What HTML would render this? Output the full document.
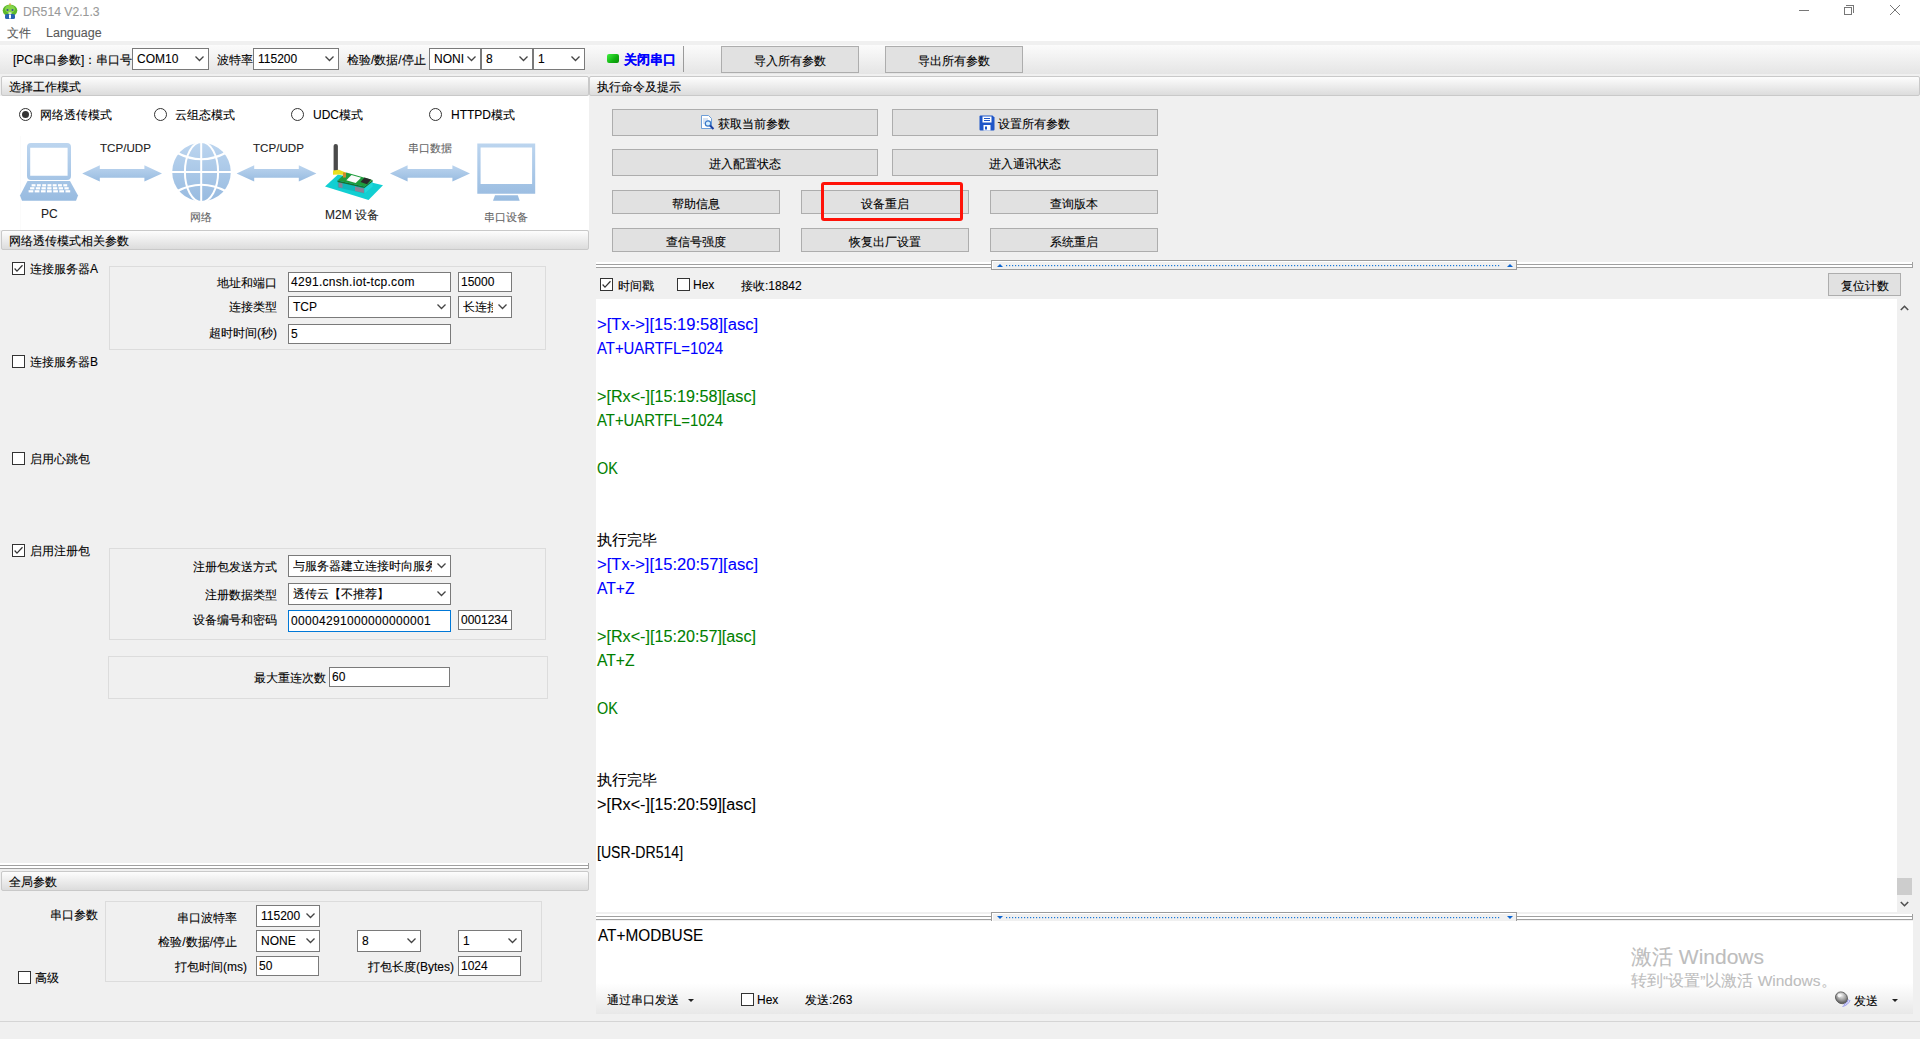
<!DOCTYPE html>
<html><head><meta charset="utf-8"><style>
*{box-sizing:border-box;margin:0;padding:0}
html,body{width:1920px;height:1039px;overflow:hidden;background:#f0f0f0;font-family:"Liberation Sans",sans-serif;font-size:12px;color:#000;position:relative;-webkit-text-stroke:0.1px currentColor}
.a{position:absolute;white-space:nowrap}
.hdr{position:absolute;height:20px;border:1px solid #c9c9c9;border-radius:2px;background:linear-gradient(#fdfdfd,#dcdcdc);}
.hdr span{position:absolute;left:7px;top:3px;font-size:12px;line-height:14px}
.inp{position:absolute;background:#fff;border:1px solid #7a7a7a;height:20px;font-size:12px;line-height:18px;padding-left:2px;overflow:hidden;white-space:nowrap}
.cmb{position:absolute;background:#fff;border:1px solid #7a7a7a;height:21px;font-size:12px;line-height:19px;padding-left:4px;overflow:hidden;white-space:nowrap}
.cmb svg{position:absolute;right:4px}
.btn{position:absolute;background:#e1e1e1;border:1px solid #adadad;font-size:12px;text-align:center;white-space:nowrap}
.cb{position:absolute;width:13px;height:13px;border:1px solid #333;background:#fff}
.rd{position:absolute;width:13px;height:13px;border:1px solid #333;border-radius:50%;background:#fff}
.rd.on::after{content:"";position:absolute;left:2px;top:2px;width:7px;height:7px;border-radius:50%;background:#333}
.grp{position:absolute;border:1px solid #dcdcdc}
.log{position:absolute;left:598px;font-size:16px;line-height:24px;white-space:nowrap}
.log .c{font-size:15px}
.blue{color:#0000ff}.green{color:#008000}
</style></head><body>
<div class="a" style="left:0;top:0;width:1920px;height:41px;background:#fff"></div>
<div class="a" style="left:23px;top:5px;font-size:12.2px;color:#999">DR514 V2.1.3</div>
<svg class="a" style="left:2px;top:3px" width="16" height="16" viewBox="0 0 16 16"><ellipse cx="8" cy="7.5" rx="7.3" ry="6" fill="#5cb82a"/><ellipse cx="8" cy="6" rx="5" ry="4" fill="#86d44a"/><path d="M7 0.5L8 3L9 0.5Z" fill="#f0a030"/><rect x="3" y="11" width="10" height="5" rx="1.5" fill="#2a62b0"/><rect x="7" y="11.5" width="2" height="4" fill="#fff"/><circle cx="5.5" cy="7" r="1" fill="#3a4a9a"/><circle cx="10.5" cy="7" r="1" fill="#3a4a9a"/><rect x="6.5" y="9.5" width="3" height="1.3" fill="#fff"/></svg>
<div class="a" style="left:7px;top:25px;color:#5a5a5a">文件</div>
<div class="a" style="left:46px;top:26px;color:#5a5a5a;font-size:12.5px">Language</div>
<div class="a" style="left:1799px;top:10px;width:10px;height:1px;background:#777"></div>
<div class="a" style="left:1844px;top:7px;width:8px;height:8px;border:1px solid #777"></div>
<div class="a" style="left:1846px;top:5px;width:8px;height:8px;border-top:1px solid #777;border-right:1px solid #777"></div>
<svg class="a" style="left:1889px;top:4px" width="12" height="12"><path d="M1 1L11 11M11 1L1 11" stroke="#777" stroke-width="1"/></svg>
<div class="a" style="left:0;top:45px;width:1920px;height:29px;background:linear-gradient(#fbfbfb,#e5e5e5)"></div>
<div class="a" style="left:13px;top:52px;">[PC串口参数]：串口号</div>
<div class="cmb" style="left:132px;top:48px;width:77px;height:22px;line-height:20px;padding-left:4px;">COM10<svg style="top:7px" width="9" height="6"><path d="M0.5 0.5L4.5 4.5L8.5 0.5" fill="none" stroke="#444" stroke-width="1.3"/></svg></div>
<div class="a" style="left:217px;top:52px;">波特率</div>
<div class="cmb" style="left:253px;top:48px;width:86px;height:22px;line-height:20px;padding-left:4px;">115200<svg style="top:7px" width="9" height="6"><path d="M0.5 0.5L4.5 4.5L8.5 0.5" fill="none" stroke="#444" stroke-width="1.3"/></svg></div>
<div class="a" style="left:347px;top:52px;">检验/数据/停止</div>
<div class="cmb" style="left:429px;top:48px;width:52px;height:22px;line-height:20px;padding-left:4px;">NONI<svg style="top:7px" width="9" height="6"><path d="M0.5 0.5L4.5 4.5L8.5 0.5" fill="none" stroke="#444" stroke-width="1.3"/></svg></div>
<div class="cmb" style="left:481px;top:48px;width:52px;height:22px;line-height:20px;padding-left:4px;">8<svg style="top:7px" width="9" height="6"><path d="M0.5 0.5L4.5 4.5L8.5 0.5" fill="none" stroke="#444" stroke-width="1.3"/></svg></div>
<div class="cmb" style="left:533px;top:48px;width:52px;height:22px;line-height:20px;padding-left:4px;">1<svg style="top:7px" width="9" height="6"><path d="M0.5 0.5L4.5 4.5L8.5 0.5" fill="none" stroke="#444" stroke-width="1.3"/></svg></div>
<div class="a" style="left:607px;top:54px;width:12px;height:9px;border-radius:2px;background:linear-gradient(135deg,#40f040,#10b010 60%,#0a900a)"></div>
<div class="a" style="left:624px;top:52px;font-weight:bold;color:#0000ff;font-size:12.7px">关闭串口</div>
<div class="a" style="left:683px;top:46px;width:1px;height:26px;background:#9a9a9a"></div>
<div class="btn" style="left:721px;top:46px;width:138px;height:27px;line-height:23px;padding-top:3px;">导入所有参数</div>
<div class="btn" style="left:885px;top:46px;width:138px;height:27px;line-height:23px;padding-top:3px;">导出所有参数</div>
<div class="hdr" style="left:1px;top:76px;width:588px;height:20px"><span>选择工作模式</span></div>
<div class="a" style="left:0;top:96px;width:589px;height:134px;background:#fff"></div>
<div class="a" style="left:20px;top:136px;width:1px;height:94px;background:#fbfbfb"></div>
<div class="rd on" style="left:19px;top:108px"></div>
<div class="a" style="left:40px;top:107px;">网络透传模式</div>
<div class="rd" style="left:154px;top:108px"></div>
<div class="a" style="left:175px;top:107px;">云组态模式</div>
<div class="rd" style="left:291px;top:108px"></div>
<div class="a" style="left:313px;top:107px;">UDC模式</div>
<div class="rd" style="left:429px;top:108px"></div>
<div class="a" style="left:451px;top:107px;">HTTPD模式</div>
<svg class="a" style="left:0;top:0" width="589" height="230" viewBox="0 0 589 230"><defs><linearGradient id="lb" x1="0" y1="0" x2="0" y2="1"><stop offset="0" stop-color="#bcd5ef"/><stop offset="1" stop-color="#98bbe0"/></linearGradient><linearGradient id="lb2" gradientUnits="userSpaceOnUse" x1="0" y1="143" x2="0" y2="201"><stop offset="0" stop-color="#bcd5ef"/><stop offset="1" stop-color="#98bbe0"/></linearGradient></defs><path d="M82.2 173.4L99.80000000000001 165.20000000000002V169.1H144.4V165.20000000000002L162 173.4L144.4 181.6V177.70000000000002H99.80000000000001V181.6Z" fill="url(#lb)"/><path d="M236.6 173.4L254.2 165.20000000000002V169.1H298.79999999999995V165.20000000000002L316.4 173.4L298.79999999999995 181.6V177.70000000000002H254.2V181.6Z" fill="url(#lb)"/><path d="M390 173.4L407.6 165.20000000000002V169.1H452.4V165.20000000000002L470 173.4L452.4 181.6V177.70000000000002H407.6V181.6Z" fill="url(#lb)"/><path fill-rule="evenodd" fill="url(#lb2)" d="M31 143H67Q71 143 71 147V176Q71 180 67 180H31Q27 180 27 176V147Q27 143 31 143ZM30.2 147.8V175.7H67.6V147.8Z"/><path fill="url(#lb2)" d="M27.5 181H70L78 195.6L76 200.7H22L20 195.6Z"/><rect x="31.6" y="184.2" width="3.9" height="2.2" fill="#fff"/><rect x="36.9" y="184.2" width="3.9" height="2.2" fill="#fff"/><rect x="42.2" y="184.2" width="3.9" height="2.2" fill="#fff"/><rect x="47.5" y="184.2" width="3.9" height="2.2" fill="#fff"/><rect x="52.7" y="184.2" width="3.9" height="2.2" fill="#fff"/><rect x="58.0" y="184.2" width="3.9" height="2.2" fill="#fff"/><rect x="63.3" y="184.2" width="3.9" height="2.2" fill="#fff"/><rect x="30.1" y="187.2" width="4.3" height="2.2" fill="#fff"/><rect x="35.8" y="187.2" width="4.3" height="2.2" fill="#fff"/><rect x="41.5" y="187.2" width="4.3" height="2.2" fill="#fff"/><rect x="47.2" y="187.2" width="4.3" height="2.2" fill="#fff"/><rect x="53.0" y="187.2" width="4.3" height="2.2" fill="#fff"/><rect x="58.7" y="187.2" width="4.3" height="2.2" fill="#fff"/><rect x="64.4" y="187.2" width="4.3" height="2.2" fill="#fff"/><rect x="28.6" y="190.2" width="4.7" height="2.2" fill="#fff"/><rect x="34.7" y="190.2" width="4.7" height="2.2" fill="#fff"/><rect x="40.9" y="190.2" width="4.7" height="2.2" fill="#fff"/><rect x="47.0" y="190.2" width="4.7" height="2.2" fill="#fff"/><rect x="53.2" y="190.2" width="4.7" height="2.2" fill="#fff"/><rect x="59.3" y="190.2" width="4.7" height="2.2" fill="#fff"/><rect x="65.5" y="190.2" width="4.7" height="2.2" fill="#fff"/><g><circle cx="201.5" cy="172" r="29.3" fill="url(#lb2)"/><g fill="none" stroke="#fff" stroke-width="2"><line x1="201.2" y1="142" x2="201.2" y2="202"/><line x1="172" y1="172" x2="231" y2="172"/><ellipse cx="201.5" cy="172" rx="16.6" ry="30"/><path d="M176.5 152.5Q201.5 166 226.5 152.5"/><path d="M176.5 191.5Q201.5 178 226.5 191.5"/></g></g><path fill-rule="evenodd" fill="url(#lb2)" d="M477.3 143.4H535.2V193.8H477.3ZM480.6 147.4V184H532.1V147.4Z"/><path fill="url(#lb2)" d="M495 195.3H517.8L519.7 200.7H493Z"/><path fill="#12cfd2" d="M325 186.5L338 174.4L383 185.2L368.5 200Z"/><path fill="#0fb8bb" d="M337.8 181.5L364.5 187.5V193.5L337.8 187.5Z"/><path fill="#22d8da" d="M364.5 187.5L372.6 181V186.5L364.5 193.5Z"/><path fill="#8a8296" d="M338.5 182.5L342.5 183.4V188L338.5 187.2ZM355 186.5L364 188.5V193L355 191Z"/><path fill="#1a6e2e" d="M337.5 180.5L364.5 186.5L372.6 180V181.5L364.5 188L337.5 182Z"/><path fill="#1e9c3c" d="M337.5 180.5L346.3 172.4L372.6 180L364.5 186.5Z"/><path fill="#fbfbfb" d="M346.3 180.2L351.5 175L361 177.8L355.7 183Z"/><path fill="#2a2a2a" d="M360.5 182L364.5 177.4L371 179.5L367 184.3Z"/><rect x="333.6" y="144" width="4.3" height="28" rx="2.1" fill="#4a4a4a"/><path fill="#e8e020" d="M333 170.5L339 169.7L345.5 172.5V175L339 174.5L333 174.8Z"/><rect x="343" y="172.5" width="3" height="5" fill="#d08a30"/></svg>
<div class="a" style="left:100px;top:141px;font-size:11.6px;color:#222">TCP/UDP</div>
<div class="a" style="left:253px;top:141px;font-size:11.6px;color:#222">TCP/UDP</div>
<div class="a" style="left:408px;top:141px;font-size:11px;color:#666">串口数据</div>
<div class="a" style="left:41px;top:207px;font-size:12px;color:#222">PC</div>
<div class="a" style="left:190px;top:210px;font-size:11px;color:#666">网络</div>
<div class="a" style="left:325px;top:207px;font-size:12px;color:#222">M2M 设备</div>
<div class="a" style="left:484px;top:210px;font-size:11px;color:#666">串口设备</div>
<div class="hdr" style="left:1px;top:230px;width:588px;height:20px"><span>网络透传模式相关参数</span></div>
<div class="cb" style="left:12px;top:262px"><svg class="a" style="left:-1px;top:-1px" width="13" height="13"><path d="M2.6 6.5L5 9.1L10.5 3.3" fill="none" stroke="#333" stroke-width="1.25"/></svg></div>
<div class="a" style="left:30px;top:261px;">连接服务器A</div>
<div class="grp" style="left:109px;top:266px;width:437px;height:84px"></div>
<div class="a" style="left:-23px;width:300px;text-align:right;top:275px;">地址和端口</div>
<div class="inp" style="left:288px;top:272px;width:163px;height:20px;line-height:18px;"><span style="letter-spacing:0.3px">4291.cnsh.iot-tcp.com</span></div>
<div class="inp" style="left:458px;top:272px;width:54px;height:20px;line-height:18px;">15000</div>
<div class="a" style="left:-23px;width:300px;text-align:right;top:299px;">连接类型</div>
<div class="cmb" style="left:288px;top:296px;width:163px;height:22px;line-height:20px;padding-left:4px;">TCP<svg style="top:7px" width="9" height="6"><path d="M0.5 0.5L4.5 4.5L8.5 0.5" fill="none" stroke="#444" stroke-width="1.3"/></svg></div>
<div class="cmb" style="left:458px;top:296px;width:54px;height:22px;line-height:20px;padding-left:4px;"><span style="display:inline-block;width:30px;overflow:hidden;vertical-align:top">长连接</span><svg style="top:7px" width="9" height="6"><path d="M0.5 0.5L4.5 4.5L8.5 0.5" fill="none" stroke="#444" stroke-width="1.3"/></svg></div>
<div class="a" style="left:-23px;width:300px;text-align:right;top:325px;">超时时间(秒)</div>
<div class="inp" style="left:288px;top:324px;width:163px;height:20px;line-height:18px;">5</div>
<div class="cb" style="left:12px;top:355px"></div>
<div class="a" style="left:30px;top:354px;">连接服务器B</div>
<div class="cb" style="left:12px;top:452px"></div>
<div class="a" style="left:30px;top:451px;">启用心跳包</div>
<div class="cb" style="left:12px;top:544px"><svg class="a" style="left:-1px;top:-1px" width="13" height="13"><path d="M2.6 6.5L5 9.1L10.5 3.3" fill="none" stroke="#333" stroke-width="1.25"/></svg></div>
<div class="a" style="left:30px;top:543px;">启用注册包</div>
<div class="grp" style="left:109px;top:548px;width:437px;height:92px"></div>
<div class="a" style="left:-23px;width:300px;text-align:right;top:559px;">注册包发送方式</div>
<div class="cmb" style="left:288px;top:555px;width:163px;height:22px;line-height:20px;padding-left:4px;"><span style="display:inline-block;width:139px;overflow:hidden;vertical-align:top">与服务器建立连接时向服务器发送</span><svg style="top:7px" width="9" height="6"><path d="M0.5 0.5L4.5 4.5L8.5 0.5" fill="none" stroke="#444" stroke-width="1.3"/></svg></div>
<div class="a" style="left:-23px;width:300px;text-align:right;top:587px;">注册数据类型</div>
<div class="cmb" style="left:288px;top:583px;width:163px;height:22px;line-height:20px;padding-left:4px;">透传云【不推荐】<svg style="top:7px" width="9" height="6"><path d="M0.5 0.5L4.5 4.5L8.5 0.5" fill="none" stroke="#444" stroke-width="1.3"/></svg></div>
<div class="a" style="left:-23px;width:300px;text-align:right;top:612px;">设备编号和密码</div>
<div class="inp" style="left:288px;top:610px;width:163px;height:22px;line-height:20px;border-color:#0078d7"><span style="letter-spacing:0.32px">00004291000000000001</span></div>
<div class="inp" style="left:458px;top:610px;width:54px;height:20px;line-height:18px;">0001234</div>
<div class="grp" style="left:108px;top:656px;width:440px;height:43px"></div>
<div class="a" style="left:26px;width:300px;text-align:right;top:670px;">最大重连次数</div>
<div class="inp" style="left:329px;top:667px;width:121px;height:20px;line-height:18px;">60</div>
<div class="a" style="left:0;top:863px;width:589px;height:6px;background:linear-gradient(#fff 0,#fff 2px,#a0a0a0 2px,#a0a0a0 3px,#fff 3px,#fff 5px,#a0a0a0 5px)"></div>
<div class="a" style="left:588px;top:863px;width:1px;height:6px;background:#a0a0a0"></div>
<div class="hdr" style="left:1px;top:871px;width:588px;height:20px"><span>全局参数</span></div>
<div class="a" style="left:50px;top:907px;">串口参数</div>
<div class="grp" style="left:105px;top:901px;width:437px;height:81px"></div>
<div class="a" style="left:-63px;width:300px;text-align:right;top:910px;">串口波特率</div>
<div class="cmb" style="left:256px;top:905px;width:64px;height:22px;line-height:20px;padding-left:4px;"><span style="display:inline-block;width:40px;overflow:hidden;vertical-align:top">115200</span><svg style="top:7px" width="9" height="6"><path d="M0.5 0.5L4.5 4.5L8.5 0.5" fill="none" stroke="#444" stroke-width="1.3"/></svg></div>
<div class="a" style="left:-63px;width:300px;text-align:right;top:934px;">检验/数据/停止</div>
<div class="cmb" style="left:256px;top:930px;width:64px;height:22px;line-height:20px;padding-left:4px;">NONE<svg style="top:7px" width="9" height="6"><path d="M0.5 0.5L4.5 4.5L8.5 0.5" fill="none" stroke="#444" stroke-width="1.3"/></svg></div>
<div class="cmb" style="left:357px;top:930px;width:64px;height:22px;line-height:20px;padding-left:4px;">8<svg style="top:7px" width="9" height="6"><path d="M0.5 0.5L4.5 4.5L8.5 0.5" fill="none" stroke="#444" stroke-width="1.3"/></svg></div>
<div class="cmb" style="left:458px;top:930px;width:64px;height:22px;line-height:20px;padding-left:4px;">1<svg style="top:7px" width="9" height="6"><path d="M0.5 0.5L4.5 4.5L8.5 0.5" fill="none" stroke="#444" stroke-width="1.3"/></svg></div>
<div class="a" style="left:-53px;width:300px;text-align:right;top:959px;">打包时间(ms)</div>
<div class="inp" style="left:256px;top:956px;width:63px;height:20px;line-height:18px;">50</div>
<div class="a" style="left:154px;width:300px;text-align:right;top:959px;">打包长度(Bytes)</div>
<div class="inp" style="left:458px;top:956px;width:63px;height:20px;line-height:18px;">1024</div>
<div class="cb" style="left:18px;top:971px"></div>
<div class="a" style="left:35px;top:970px;">高级</div>
<div class="hdr" style="left:589px;top:76px;width:1331px;height:20px"><span>执行命令及提示</span></div>
<div class="btn" style="left:612px;top:109px;width:266px;height:27px;line-height:23px;padding-top:3px;"><span style="padding-left:18px">获取当前参数</span></div>
<svg class="a" style="left:700px;top:115px" width="16" height="15" viewBox="0 0 16 15"><path d="M1.5 0.5H8.5L11.5 3.5V13.5H1.5Z" fill="#fff" stroke="#6f9fd8" stroke-width="1"/><path d="M3 4h5M3 6h6M3 8h3" stroke="#b0c8e8" stroke-width="1"/><circle cx="8" cy="8.5" r="2.7" fill="#d8f0ff" stroke="#3a78c8" stroke-width="1.2"/><path d="M10 10.5L13.5 14" stroke="#1a3fa0" stroke-width="2"/></svg>
<div class="btn" style="left:892px;top:109px;width:266px;height:27px;line-height:23px;padding-top:3px;"><span style="padding-left:18px">设置所有参数</span></div>
<svg class="a" style="left:979px;top:115px" width="16" height="16" viewBox="0 0 16 16"><path d="M0.5 1.5Q0.5 0.5 1.5 0.5H13.5L15.5 2.5V14.5Q15.5 15.5 14.5 15.5H1.5Q0.5 15.5 0.5 14.5Z" fill="#1f56c8"/><rect x="3.5" y="1.5" width="9" height="6" fill="#fff"/><path d="M5 3.5h6M5 5.5h6" stroke="#1f56c8" stroke-width="1"/><rect x="4.5" y="10" width="7" height="5.5" fill="#fff"/><rect x="6" y="11.5" width="2" height="3" fill="#1f56c8"/></svg>
<div class="btn" style="left:612px;top:149px;width:266px;height:27px;line-height:23px;padding-top:3px;">进入配置状态</div>
<div class="btn" style="left:892px;top:149px;width:266px;height:27px;line-height:23px;padding-top:3px;">进入通讯状态</div>
<div class="btn" style="left:612px;top:190px;width:168px;height:24px;line-height:20px;padding-top:3px;">帮助信息</div>
<div class="btn" style="left:801px;top:190px;width:168px;height:24px;line-height:20px;padding-top:3px;">设备重启</div>
<div class="btn" style="left:990px;top:190px;width:168px;height:24px;line-height:20px;padding-top:3px;">查询版本</div>
<div class="btn" style="left:612px;top:228px;width:168px;height:24px;line-height:20px;padding-top:3px;">查信号强度</div>
<div class="btn" style="left:801px;top:228px;width:168px;height:24px;line-height:20px;padding-top:3px;">恢复出厂设置</div>
<div class="btn" style="left:990px;top:228px;width:168px;height:24px;line-height:20px;padding-top:3px;">系统重启</div>
<div class="a" style="left:821px;top:182px;width:142px;height:39px;border:3px solid #ff1208;border-radius:3px"></div>
<div class="a" style="left:596px;top:262px;width:1317px;height:6px;background:linear-gradient(#fff 0,#fff 2px,#a0a0a0 2px,#a0a0a0 3px,#fff 3px,#fff 5px,#a0a0a0 5px)"></div>
<div class="a" style="left:1912px;top:262px;width:1px;height:6px;background:#a0a0a0"></div>
<div class="a" style="left:991px;top:260px;width:526px;height:10px;background:#f0f0f0;border:1px solid #9b9b9b;box-shadow:inset 1px 1px 0 #fff"></div>
<svg class="a" style="left:997px;top:264px" width="6" height="3"><path d="M0 3L3 0L6 3Z" fill="#0c64d0"/></svg>
<svg class="a" style="left:1507px;top:264px" width="6" height="3"><path d="M0 3L3 0L6 3Z" fill="#0c64d0"/></svg>
<svg class="a" style="left:1006px;top:265px" width="496" height="2"><rect x="0" y="0" width="1.2" height="1.2" fill="#1a78d8"/><rect x="3" y="0" width="1.2" height="1.2" fill="#1a78d8"/><rect x="6" y="0" width="1.2" height="1.2" fill="#1a78d8"/><rect x="9" y="0" width="1.2" height="1.2" fill="#1a78d8"/><rect x="12" y="0" width="1.2" height="1.2" fill="#1a78d8"/><rect x="15" y="0" width="1.2" height="1.2" fill="#1a78d8"/><rect x="18" y="0" width="1.2" height="1.2" fill="#1a78d8"/><rect x="21" y="0" width="1.2" height="1.2" fill="#1a78d8"/><rect x="24" y="0" width="1.2" height="1.2" fill="#1a78d8"/><rect x="27" y="0" width="1.2" height="1.2" fill="#1a78d8"/><rect x="30" y="0" width="1.2" height="1.2" fill="#1a78d8"/><rect x="33" y="0" width="1.2" height="1.2" fill="#1a78d8"/><rect x="36" y="0" width="1.2" height="1.2" fill="#1a78d8"/><rect x="39" y="0" width="1.2" height="1.2" fill="#1a78d8"/><rect x="42" y="0" width="1.2" height="1.2" fill="#1a78d8"/><rect x="45" y="0" width="1.2" height="1.2" fill="#1a78d8"/><rect x="48" y="0" width="1.2" height="1.2" fill="#1a78d8"/><rect x="51" y="0" width="1.2" height="1.2" fill="#1a78d8"/><rect x="54" y="0" width="1.2" height="1.2" fill="#1a78d8"/><rect x="57" y="0" width="1.2" height="1.2" fill="#1a78d8"/><rect x="60" y="0" width="1.2" height="1.2" fill="#1a78d8"/><rect x="63" y="0" width="1.2" height="1.2" fill="#1a78d8"/><rect x="66" y="0" width="1.2" height="1.2" fill="#1a78d8"/><rect x="69" y="0" width="1.2" height="1.2" fill="#1a78d8"/><rect x="72" y="0" width="1.2" height="1.2" fill="#1a78d8"/><rect x="75" y="0" width="1.2" height="1.2" fill="#1a78d8"/><rect x="78" y="0" width="1.2" height="1.2" fill="#1a78d8"/><rect x="81" y="0" width="1.2" height="1.2" fill="#1a78d8"/><rect x="84" y="0" width="1.2" height="1.2" fill="#1a78d8"/><rect x="87" y="0" width="1.2" height="1.2" fill="#1a78d8"/><rect x="90" y="0" width="1.2" height="1.2" fill="#1a78d8"/><rect x="93" y="0" width="1.2" height="1.2" fill="#1a78d8"/><rect x="96" y="0" width="1.2" height="1.2" fill="#1a78d8"/><rect x="99" y="0" width="1.2" height="1.2" fill="#1a78d8"/><rect x="102" y="0" width="1.2" height="1.2" fill="#1a78d8"/><rect x="105" y="0" width="1.2" height="1.2" fill="#1a78d8"/><rect x="108" y="0" width="1.2" height="1.2" fill="#1a78d8"/><rect x="111" y="0" width="1.2" height="1.2" fill="#1a78d8"/><rect x="114" y="0" width="1.2" height="1.2" fill="#1a78d8"/><rect x="117" y="0" width="1.2" height="1.2" fill="#1a78d8"/><rect x="120" y="0" width="1.2" height="1.2" fill="#1a78d8"/><rect x="123" y="0" width="1.2" height="1.2" fill="#1a78d8"/><rect x="126" y="0" width="1.2" height="1.2" fill="#1a78d8"/><rect x="129" y="0" width="1.2" height="1.2" fill="#1a78d8"/><rect x="132" y="0" width="1.2" height="1.2" fill="#1a78d8"/><rect x="135" y="0" width="1.2" height="1.2" fill="#1a78d8"/><rect x="138" y="0" width="1.2" height="1.2" fill="#1a78d8"/><rect x="141" y="0" width="1.2" height="1.2" fill="#1a78d8"/><rect x="144" y="0" width="1.2" height="1.2" fill="#1a78d8"/><rect x="147" y="0" width="1.2" height="1.2" fill="#1a78d8"/><rect x="150" y="0" width="1.2" height="1.2" fill="#1a78d8"/><rect x="153" y="0" width="1.2" height="1.2" fill="#1a78d8"/><rect x="156" y="0" width="1.2" height="1.2" fill="#1a78d8"/><rect x="159" y="0" width="1.2" height="1.2" fill="#1a78d8"/><rect x="162" y="0" width="1.2" height="1.2" fill="#1a78d8"/><rect x="165" y="0" width="1.2" height="1.2" fill="#1a78d8"/><rect x="168" y="0" width="1.2" height="1.2" fill="#1a78d8"/><rect x="171" y="0" width="1.2" height="1.2" fill="#1a78d8"/><rect x="174" y="0" width="1.2" height="1.2" fill="#1a78d8"/><rect x="177" y="0" width="1.2" height="1.2" fill="#1a78d8"/><rect x="180" y="0" width="1.2" height="1.2" fill="#1a78d8"/><rect x="183" y="0" width="1.2" height="1.2" fill="#1a78d8"/><rect x="186" y="0" width="1.2" height="1.2" fill="#1a78d8"/><rect x="189" y="0" width="1.2" height="1.2" fill="#1a78d8"/><rect x="192" y="0" width="1.2" height="1.2" fill="#1a78d8"/><rect x="195" y="0" width="1.2" height="1.2" fill="#1a78d8"/><rect x="198" y="0" width="1.2" height="1.2" fill="#1a78d8"/><rect x="201" y="0" width="1.2" height="1.2" fill="#1a78d8"/><rect x="204" y="0" width="1.2" height="1.2" fill="#1a78d8"/><rect x="207" y="0" width="1.2" height="1.2" fill="#1a78d8"/><rect x="210" y="0" width="1.2" height="1.2" fill="#1a78d8"/><rect x="213" y="0" width="1.2" height="1.2" fill="#1a78d8"/><rect x="216" y="0" width="1.2" height="1.2" fill="#1a78d8"/><rect x="219" y="0" width="1.2" height="1.2" fill="#1a78d8"/><rect x="222" y="0" width="1.2" height="1.2" fill="#1a78d8"/><rect x="225" y="0" width="1.2" height="1.2" fill="#1a78d8"/><rect x="228" y="0" width="1.2" height="1.2" fill="#1a78d8"/><rect x="231" y="0" width="1.2" height="1.2" fill="#1a78d8"/><rect x="234" y="0" width="1.2" height="1.2" fill="#1a78d8"/><rect x="237" y="0" width="1.2" height="1.2" fill="#1a78d8"/><rect x="240" y="0" width="1.2" height="1.2" fill="#1a78d8"/><rect x="243" y="0" width="1.2" height="1.2" fill="#1a78d8"/><rect x="246" y="0" width="1.2" height="1.2" fill="#1a78d8"/><rect x="249" y="0" width="1.2" height="1.2" fill="#1a78d8"/><rect x="252" y="0" width="1.2" height="1.2" fill="#1a78d8"/><rect x="255" y="0" width="1.2" height="1.2" fill="#1a78d8"/><rect x="258" y="0" width="1.2" height="1.2" fill="#1a78d8"/><rect x="261" y="0" width="1.2" height="1.2" fill="#1a78d8"/><rect x="264" y="0" width="1.2" height="1.2" fill="#1a78d8"/><rect x="267" y="0" width="1.2" height="1.2" fill="#1a78d8"/><rect x="270" y="0" width="1.2" height="1.2" fill="#1a78d8"/><rect x="273" y="0" width="1.2" height="1.2" fill="#1a78d8"/><rect x="276" y="0" width="1.2" height="1.2" fill="#1a78d8"/><rect x="279" y="0" width="1.2" height="1.2" fill="#1a78d8"/><rect x="282" y="0" width="1.2" height="1.2" fill="#1a78d8"/><rect x="285" y="0" width="1.2" height="1.2" fill="#1a78d8"/><rect x="288" y="0" width="1.2" height="1.2" fill="#1a78d8"/><rect x="291" y="0" width="1.2" height="1.2" fill="#1a78d8"/><rect x="294" y="0" width="1.2" height="1.2" fill="#1a78d8"/><rect x="297" y="0" width="1.2" height="1.2" fill="#1a78d8"/><rect x="300" y="0" width="1.2" height="1.2" fill="#1a78d8"/><rect x="303" y="0" width="1.2" height="1.2" fill="#1a78d8"/><rect x="306" y="0" width="1.2" height="1.2" fill="#1a78d8"/><rect x="309" y="0" width="1.2" height="1.2" fill="#1a78d8"/><rect x="312" y="0" width="1.2" height="1.2" fill="#1a78d8"/><rect x="315" y="0" width="1.2" height="1.2" fill="#1a78d8"/><rect x="318" y="0" width="1.2" height="1.2" fill="#1a78d8"/><rect x="321" y="0" width="1.2" height="1.2" fill="#1a78d8"/><rect x="324" y="0" width="1.2" height="1.2" fill="#1a78d8"/><rect x="327" y="0" width="1.2" height="1.2" fill="#1a78d8"/><rect x="330" y="0" width="1.2" height="1.2" fill="#1a78d8"/><rect x="333" y="0" width="1.2" height="1.2" fill="#1a78d8"/><rect x="336" y="0" width="1.2" height="1.2" fill="#1a78d8"/><rect x="339" y="0" width="1.2" height="1.2" fill="#1a78d8"/><rect x="342" y="0" width="1.2" height="1.2" fill="#1a78d8"/><rect x="345" y="0" width="1.2" height="1.2" fill="#1a78d8"/><rect x="348" y="0" width="1.2" height="1.2" fill="#1a78d8"/><rect x="351" y="0" width="1.2" height="1.2" fill="#1a78d8"/><rect x="354" y="0" width="1.2" height="1.2" fill="#1a78d8"/><rect x="357" y="0" width="1.2" height="1.2" fill="#1a78d8"/><rect x="360" y="0" width="1.2" height="1.2" fill="#1a78d8"/><rect x="363" y="0" width="1.2" height="1.2" fill="#1a78d8"/><rect x="366" y="0" width="1.2" height="1.2" fill="#1a78d8"/><rect x="369" y="0" width="1.2" height="1.2" fill="#1a78d8"/><rect x="372" y="0" width="1.2" height="1.2" fill="#1a78d8"/><rect x="375" y="0" width="1.2" height="1.2" fill="#1a78d8"/><rect x="378" y="0" width="1.2" height="1.2" fill="#1a78d8"/><rect x="381" y="0" width="1.2" height="1.2" fill="#1a78d8"/><rect x="384" y="0" width="1.2" height="1.2" fill="#1a78d8"/><rect x="387" y="0" width="1.2" height="1.2" fill="#1a78d8"/><rect x="390" y="0" width="1.2" height="1.2" fill="#1a78d8"/><rect x="393" y="0" width="1.2" height="1.2" fill="#1a78d8"/><rect x="396" y="0" width="1.2" height="1.2" fill="#1a78d8"/><rect x="399" y="0" width="1.2" height="1.2" fill="#1a78d8"/><rect x="402" y="0" width="1.2" height="1.2" fill="#1a78d8"/><rect x="405" y="0" width="1.2" height="1.2" fill="#1a78d8"/><rect x="408" y="0" width="1.2" height="1.2" fill="#1a78d8"/><rect x="411" y="0" width="1.2" height="1.2" fill="#1a78d8"/><rect x="414" y="0" width="1.2" height="1.2" fill="#1a78d8"/><rect x="417" y="0" width="1.2" height="1.2" fill="#1a78d8"/><rect x="420" y="0" width="1.2" height="1.2" fill="#1a78d8"/><rect x="423" y="0" width="1.2" height="1.2" fill="#1a78d8"/><rect x="426" y="0" width="1.2" height="1.2" fill="#1a78d8"/><rect x="429" y="0" width="1.2" height="1.2" fill="#1a78d8"/><rect x="432" y="0" width="1.2" height="1.2" fill="#1a78d8"/><rect x="435" y="0" width="1.2" height="1.2" fill="#1a78d8"/><rect x="438" y="0" width="1.2" height="1.2" fill="#1a78d8"/><rect x="441" y="0" width="1.2" height="1.2" fill="#1a78d8"/><rect x="444" y="0" width="1.2" height="1.2" fill="#1a78d8"/><rect x="447" y="0" width="1.2" height="1.2" fill="#1a78d8"/><rect x="450" y="0" width="1.2" height="1.2" fill="#1a78d8"/><rect x="453" y="0" width="1.2" height="1.2" fill="#1a78d8"/><rect x="456" y="0" width="1.2" height="1.2" fill="#1a78d8"/><rect x="459" y="0" width="1.2" height="1.2" fill="#1a78d8"/><rect x="462" y="0" width="1.2" height="1.2" fill="#1a78d8"/><rect x="465" y="0" width="1.2" height="1.2" fill="#1a78d8"/><rect x="468" y="0" width="1.2" height="1.2" fill="#1a78d8"/><rect x="471" y="0" width="1.2" height="1.2" fill="#1a78d8"/><rect x="474" y="0" width="1.2" height="1.2" fill="#1a78d8"/><rect x="477" y="0" width="1.2" height="1.2" fill="#1a78d8"/><rect x="480" y="0" width="1.2" height="1.2" fill="#1a78d8"/><rect x="483" y="0" width="1.2" height="1.2" fill="#1a78d8"/><rect x="486" y="0" width="1.2" height="1.2" fill="#1a78d8"/><rect x="489" y="0" width="1.2" height="1.2" fill="#1a78d8"/><rect x="492" y="0" width="1.2" height="1.2" fill="#1a78d8"/></svg>
<div class="cb" style="left:600px;top:278px"><svg class="a" style="left:-1px;top:-1px" width="13" height="13"><path d="M2.6 6.5L5 9.1L10.5 3.3" fill="none" stroke="#333" stroke-width="1.25"/></svg></div>
<div class="a" style="left:618px;top:278px;">时间戳</div>
<div class="cb" style="left:677px;top:278px"></div>
<div class="a" style="left:693px;top:278px;">Hex</div>
<div class="a" style="left:741px;top:278px;">接收:18842</div>
<div class="btn" style="left:1828px;top:273px;width:73px;height:23px;line-height:19px;padding-top:3px;">复位计数</div>
<div class="a" style="left:596px;top:299px;width:1301px;height:613px;background:#fff"></div>
<svg class="a" style="left:1900px;top:305px" width="9" height="6"><path d="M0.8 5L4.5 1.3L8.2 5" fill="none" stroke="#505050" stroke-width="1.6"/></svg>
<div class="a" style="left:1897px;top:878px;width:15px;height:17px;background:#cdcdcd"></div>
<svg class="a" style="left:1900px;top:901px" width="9" height="6"><path d="M0.8 1L4.5 4.7L8.2 1" fill="none" stroke="#505050" stroke-width="1.6"/></svg>
<div class="log blue" style="left:597px;top:313px;transform:scaleX(1.035);transform-origin:0 0">&gt;[Tx-&gt;][15:19:58][asc]</div>
<div class="log blue" style="left:597px;top:337px;transform:scaleX(0.93);transform-origin:0 0">AT+UARTFL=1024</div>
<div class="log green" style="left:597px;top:385px;transform:scaleX(1.01);transform-origin:0 0">&gt;[Rx&lt;-][15:19:58][asc]</div>
<div class="log green" style="left:597px;top:409px;transform:scaleX(0.93);transform-origin:0 0">AT+UARTFL=1024</div>
<div class="log green" style="left:597px;top:457px;transform:scaleX(0.9);transform-origin:0 0">OK</div>
<div class="log " style="left:597px;top:528px;transform:scaleX(1.0);transform-origin:0 0"><span class="c">执行完毕</span></div>
<div class="log blue" style="left:597px;top:553px;transform:scaleX(1.035);transform-origin:0 0">&gt;[Tx-&gt;][15:20:57][asc]</div>
<div class="log blue" style="left:597px;top:577px;transform:scaleX(0.98);transform-origin:0 0">AT+Z</div>
<div class="log green" style="left:597px;top:625px;transform:scaleX(1.01);transform-origin:0 0">&gt;[Rx&lt;-][15:20:57][asc]</div>
<div class="log green" style="left:597px;top:649px;transform:scaleX(0.98);transform-origin:0 0">AT+Z</div>
<div class="log green" style="left:597px;top:697px;transform:scaleX(0.9);transform-origin:0 0">OK</div>
<div class="log " style="left:597px;top:768px;transform:scaleX(1.0);transform-origin:0 0"><span class="c">执行完毕</span></div>
<div class="log " style="left:597px;top:793px;transform:scaleX(1.01);transform-origin:0 0">&gt;[Rx&lt;-][15:20:59][asc]</div>
<div class="log " style="left:597px;top:841px;transform:scaleX(0.88);transform-origin:0 0">[USR-DR514]</div>
<div class="a" style="left:596px;top:914px;width:1317px;height:6px;background:linear-gradient(#fff 0,#fff 2px,#a0a0a0 2px,#a0a0a0 3px,#fff 3px,#fff 5px,#a0a0a0 5px)"></div>
<div class="a" style="left:1912px;top:914px;width:1px;height:6px;background:#a0a0a0"></div>
<div class="a" style="left:991px;top:912px;width:526px;height:10px;background:#f0f0f0;border:1px solid #9b9b9b;box-shadow:inset 1px 1px 0 #fff"></div>
<svg class="a" style="left:997px;top:916px" width="6" height="3"><path d="M0 0L6 0L3 3Z" fill="#0c64d0"/></svg>
<svg class="a" style="left:1507px;top:916px" width="6" height="3"><path d="M0 0L6 0L3 3Z" fill="#0c64d0"/></svg>
<svg class="a" style="left:1006px;top:917px" width="496" height="2"><rect x="0" y="0" width="1.2" height="1.2" fill="#1a78d8"/><rect x="3" y="0" width="1.2" height="1.2" fill="#1a78d8"/><rect x="6" y="0" width="1.2" height="1.2" fill="#1a78d8"/><rect x="9" y="0" width="1.2" height="1.2" fill="#1a78d8"/><rect x="12" y="0" width="1.2" height="1.2" fill="#1a78d8"/><rect x="15" y="0" width="1.2" height="1.2" fill="#1a78d8"/><rect x="18" y="0" width="1.2" height="1.2" fill="#1a78d8"/><rect x="21" y="0" width="1.2" height="1.2" fill="#1a78d8"/><rect x="24" y="0" width="1.2" height="1.2" fill="#1a78d8"/><rect x="27" y="0" width="1.2" height="1.2" fill="#1a78d8"/><rect x="30" y="0" width="1.2" height="1.2" fill="#1a78d8"/><rect x="33" y="0" width="1.2" height="1.2" fill="#1a78d8"/><rect x="36" y="0" width="1.2" height="1.2" fill="#1a78d8"/><rect x="39" y="0" width="1.2" height="1.2" fill="#1a78d8"/><rect x="42" y="0" width="1.2" height="1.2" fill="#1a78d8"/><rect x="45" y="0" width="1.2" height="1.2" fill="#1a78d8"/><rect x="48" y="0" width="1.2" height="1.2" fill="#1a78d8"/><rect x="51" y="0" width="1.2" height="1.2" fill="#1a78d8"/><rect x="54" y="0" width="1.2" height="1.2" fill="#1a78d8"/><rect x="57" y="0" width="1.2" height="1.2" fill="#1a78d8"/><rect x="60" y="0" width="1.2" height="1.2" fill="#1a78d8"/><rect x="63" y="0" width="1.2" height="1.2" fill="#1a78d8"/><rect x="66" y="0" width="1.2" height="1.2" fill="#1a78d8"/><rect x="69" y="0" width="1.2" height="1.2" fill="#1a78d8"/><rect x="72" y="0" width="1.2" height="1.2" fill="#1a78d8"/><rect x="75" y="0" width="1.2" height="1.2" fill="#1a78d8"/><rect x="78" y="0" width="1.2" height="1.2" fill="#1a78d8"/><rect x="81" y="0" width="1.2" height="1.2" fill="#1a78d8"/><rect x="84" y="0" width="1.2" height="1.2" fill="#1a78d8"/><rect x="87" y="0" width="1.2" height="1.2" fill="#1a78d8"/><rect x="90" y="0" width="1.2" height="1.2" fill="#1a78d8"/><rect x="93" y="0" width="1.2" height="1.2" fill="#1a78d8"/><rect x="96" y="0" width="1.2" height="1.2" fill="#1a78d8"/><rect x="99" y="0" width="1.2" height="1.2" fill="#1a78d8"/><rect x="102" y="0" width="1.2" height="1.2" fill="#1a78d8"/><rect x="105" y="0" width="1.2" height="1.2" fill="#1a78d8"/><rect x="108" y="0" width="1.2" height="1.2" fill="#1a78d8"/><rect x="111" y="0" width="1.2" height="1.2" fill="#1a78d8"/><rect x="114" y="0" width="1.2" height="1.2" fill="#1a78d8"/><rect x="117" y="0" width="1.2" height="1.2" fill="#1a78d8"/><rect x="120" y="0" width="1.2" height="1.2" fill="#1a78d8"/><rect x="123" y="0" width="1.2" height="1.2" fill="#1a78d8"/><rect x="126" y="0" width="1.2" height="1.2" fill="#1a78d8"/><rect x="129" y="0" width="1.2" height="1.2" fill="#1a78d8"/><rect x="132" y="0" width="1.2" height="1.2" fill="#1a78d8"/><rect x="135" y="0" width="1.2" height="1.2" fill="#1a78d8"/><rect x="138" y="0" width="1.2" height="1.2" fill="#1a78d8"/><rect x="141" y="0" width="1.2" height="1.2" fill="#1a78d8"/><rect x="144" y="0" width="1.2" height="1.2" fill="#1a78d8"/><rect x="147" y="0" width="1.2" height="1.2" fill="#1a78d8"/><rect x="150" y="0" width="1.2" height="1.2" fill="#1a78d8"/><rect x="153" y="0" width="1.2" height="1.2" fill="#1a78d8"/><rect x="156" y="0" width="1.2" height="1.2" fill="#1a78d8"/><rect x="159" y="0" width="1.2" height="1.2" fill="#1a78d8"/><rect x="162" y="0" width="1.2" height="1.2" fill="#1a78d8"/><rect x="165" y="0" width="1.2" height="1.2" fill="#1a78d8"/><rect x="168" y="0" width="1.2" height="1.2" fill="#1a78d8"/><rect x="171" y="0" width="1.2" height="1.2" fill="#1a78d8"/><rect x="174" y="0" width="1.2" height="1.2" fill="#1a78d8"/><rect x="177" y="0" width="1.2" height="1.2" fill="#1a78d8"/><rect x="180" y="0" width="1.2" height="1.2" fill="#1a78d8"/><rect x="183" y="0" width="1.2" height="1.2" fill="#1a78d8"/><rect x="186" y="0" width="1.2" height="1.2" fill="#1a78d8"/><rect x="189" y="0" width="1.2" height="1.2" fill="#1a78d8"/><rect x="192" y="0" width="1.2" height="1.2" fill="#1a78d8"/><rect x="195" y="0" width="1.2" height="1.2" fill="#1a78d8"/><rect x="198" y="0" width="1.2" height="1.2" fill="#1a78d8"/><rect x="201" y="0" width="1.2" height="1.2" fill="#1a78d8"/><rect x="204" y="0" width="1.2" height="1.2" fill="#1a78d8"/><rect x="207" y="0" width="1.2" height="1.2" fill="#1a78d8"/><rect x="210" y="0" width="1.2" height="1.2" fill="#1a78d8"/><rect x="213" y="0" width="1.2" height="1.2" fill="#1a78d8"/><rect x="216" y="0" width="1.2" height="1.2" fill="#1a78d8"/><rect x="219" y="0" width="1.2" height="1.2" fill="#1a78d8"/><rect x="222" y="0" width="1.2" height="1.2" fill="#1a78d8"/><rect x="225" y="0" width="1.2" height="1.2" fill="#1a78d8"/><rect x="228" y="0" width="1.2" height="1.2" fill="#1a78d8"/><rect x="231" y="0" width="1.2" height="1.2" fill="#1a78d8"/><rect x="234" y="0" width="1.2" height="1.2" fill="#1a78d8"/><rect x="237" y="0" width="1.2" height="1.2" fill="#1a78d8"/><rect x="240" y="0" width="1.2" height="1.2" fill="#1a78d8"/><rect x="243" y="0" width="1.2" height="1.2" fill="#1a78d8"/><rect x="246" y="0" width="1.2" height="1.2" fill="#1a78d8"/><rect x="249" y="0" width="1.2" height="1.2" fill="#1a78d8"/><rect x="252" y="0" width="1.2" height="1.2" fill="#1a78d8"/><rect x="255" y="0" width="1.2" height="1.2" fill="#1a78d8"/><rect x="258" y="0" width="1.2" height="1.2" fill="#1a78d8"/><rect x="261" y="0" width="1.2" height="1.2" fill="#1a78d8"/><rect x="264" y="0" width="1.2" height="1.2" fill="#1a78d8"/><rect x="267" y="0" width="1.2" height="1.2" fill="#1a78d8"/><rect x="270" y="0" width="1.2" height="1.2" fill="#1a78d8"/><rect x="273" y="0" width="1.2" height="1.2" fill="#1a78d8"/><rect x="276" y="0" width="1.2" height="1.2" fill="#1a78d8"/><rect x="279" y="0" width="1.2" height="1.2" fill="#1a78d8"/><rect x="282" y="0" width="1.2" height="1.2" fill="#1a78d8"/><rect x="285" y="0" width="1.2" height="1.2" fill="#1a78d8"/><rect x="288" y="0" width="1.2" height="1.2" fill="#1a78d8"/><rect x="291" y="0" width="1.2" height="1.2" fill="#1a78d8"/><rect x="294" y="0" width="1.2" height="1.2" fill="#1a78d8"/><rect x="297" y="0" width="1.2" height="1.2" fill="#1a78d8"/><rect x="300" y="0" width="1.2" height="1.2" fill="#1a78d8"/><rect x="303" y="0" width="1.2" height="1.2" fill="#1a78d8"/><rect x="306" y="0" width="1.2" height="1.2" fill="#1a78d8"/><rect x="309" y="0" width="1.2" height="1.2" fill="#1a78d8"/><rect x="312" y="0" width="1.2" height="1.2" fill="#1a78d8"/><rect x="315" y="0" width="1.2" height="1.2" fill="#1a78d8"/><rect x="318" y="0" width="1.2" height="1.2" fill="#1a78d8"/><rect x="321" y="0" width="1.2" height="1.2" fill="#1a78d8"/><rect x="324" y="0" width="1.2" height="1.2" fill="#1a78d8"/><rect x="327" y="0" width="1.2" height="1.2" fill="#1a78d8"/><rect x="330" y="0" width="1.2" height="1.2" fill="#1a78d8"/><rect x="333" y="0" width="1.2" height="1.2" fill="#1a78d8"/><rect x="336" y="0" width="1.2" height="1.2" fill="#1a78d8"/><rect x="339" y="0" width="1.2" height="1.2" fill="#1a78d8"/><rect x="342" y="0" width="1.2" height="1.2" fill="#1a78d8"/><rect x="345" y="0" width="1.2" height="1.2" fill="#1a78d8"/><rect x="348" y="0" width="1.2" height="1.2" fill="#1a78d8"/><rect x="351" y="0" width="1.2" height="1.2" fill="#1a78d8"/><rect x="354" y="0" width="1.2" height="1.2" fill="#1a78d8"/><rect x="357" y="0" width="1.2" height="1.2" fill="#1a78d8"/><rect x="360" y="0" width="1.2" height="1.2" fill="#1a78d8"/><rect x="363" y="0" width="1.2" height="1.2" fill="#1a78d8"/><rect x="366" y="0" width="1.2" height="1.2" fill="#1a78d8"/><rect x="369" y="0" width="1.2" height="1.2" fill="#1a78d8"/><rect x="372" y="0" width="1.2" height="1.2" fill="#1a78d8"/><rect x="375" y="0" width="1.2" height="1.2" fill="#1a78d8"/><rect x="378" y="0" width="1.2" height="1.2" fill="#1a78d8"/><rect x="381" y="0" width="1.2" height="1.2" fill="#1a78d8"/><rect x="384" y="0" width="1.2" height="1.2" fill="#1a78d8"/><rect x="387" y="0" width="1.2" height="1.2" fill="#1a78d8"/><rect x="390" y="0" width="1.2" height="1.2" fill="#1a78d8"/><rect x="393" y="0" width="1.2" height="1.2" fill="#1a78d8"/><rect x="396" y="0" width="1.2" height="1.2" fill="#1a78d8"/><rect x="399" y="0" width="1.2" height="1.2" fill="#1a78d8"/><rect x="402" y="0" width="1.2" height="1.2" fill="#1a78d8"/><rect x="405" y="0" width="1.2" height="1.2" fill="#1a78d8"/><rect x="408" y="0" width="1.2" height="1.2" fill="#1a78d8"/><rect x="411" y="0" width="1.2" height="1.2" fill="#1a78d8"/><rect x="414" y="0" width="1.2" height="1.2" fill="#1a78d8"/><rect x="417" y="0" width="1.2" height="1.2" fill="#1a78d8"/><rect x="420" y="0" width="1.2" height="1.2" fill="#1a78d8"/><rect x="423" y="0" width="1.2" height="1.2" fill="#1a78d8"/><rect x="426" y="0" width="1.2" height="1.2" fill="#1a78d8"/><rect x="429" y="0" width="1.2" height="1.2" fill="#1a78d8"/><rect x="432" y="0" width="1.2" height="1.2" fill="#1a78d8"/><rect x="435" y="0" width="1.2" height="1.2" fill="#1a78d8"/><rect x="438" y="0" width="1.2" height="1.2" fill="#1a78d8"/><rect x="441" y="0" width="1.2" height="1.2" fill="#1a78d8"/><rect x="444" y="0" width="1.2" height="1.2" fill="#1a78d8"/><rect x="447" y="0" width="1.2" height="1.2" fill="#1a78d8"/><rect x="450" y="0" width="1.2" height="1.2" fill="#1a78d8"/><rect x="453" y="0" width="1.2" height="1.2" fill="#1a78d8"/><rect x="456" y="0" width="1.2" height="1.2" fill="#1a78d8"/><rect x="459" y="0" width="1.2" height="1.2" fill="#1a78d8"/><rect x="462" y="0" width="1.2" height="1.2" fill="#1a78d8"/><rect x="465" y="0" width="1.2" height="1.2" fill="#1a78d8"/><rect x="468" y="0" width="1.2" height="1.2" fill="#1a78d8"/><rect x="471" y="0" width="1.2" height="1.2" fill="#1a78d8"/><rect x="474" y="0" width="1.2" height="1.2" fill="#1a78d8"/><rect x="477" y="0" width="1.2" height="1.2" fill="#1a78d8"/><rect x="480" y="0" width="1.2" height="1.2" fill="#1a78d8"/><rect x="483" y="0" width="1.2" height="1.2" fill="#1a78d8"/><rect x="486" y="0" width="1.2" height="1.2" fill="#1a78d8"/><rect x="489" y="0" width="1.2" height="1.2" fill="#1a78d8"/><rect x="492" y="0" width="1.2" height="1.2" fill="#1a78d8"/></svg>
<div class="a" style="left:596px;top:921px;width:1317px;height:93px;background:linear-gradient(#fff 0,#fff 62px,#e8e8e8 93px)"></div>
<div class="a" style="left:598px;top:924px;font-size:16px;line-height:24px;transform:scaleX(0.96);transform-origin:0 0">AT+MODBUSE</div>
<div class="a" style="left:607px;top:992px;">通过串口发送</div>
<svg class="a" style="left:688px;top:999px" width="6" height="3"><path d="M0 0H6L3 3Z" fill="#222"/></svg>
<div class="cb" style="left:741px;top:993px"></div>
<div class="a" style="left:757px;top:993px;">Hex</div>
<div class="a" style="left:805px;top:992px;">发送:263</div>
<div class="a" style="left:1631px;top:943px;font-size:21px;color:#bdbdbd">激活 Windows</div>
<div class="a" style="left:1631px;top:971px;font-size:15.5px;color:#bdbdbd">转到“设置”以激活 Windows。</div>
<svg class="a" style="left:1834px;top:991px" width="17" height="17" viewBox="0 0 17 17"><defs><radialGradient id="spk" cx="0.35" cy="0.35" r="0.7"><stop offset="0" stop-color="#f4f4f4"/><stop offset="0.6" stop-color="#9a9a9a"/><stop offset="1" stop-color="#505050"/></radialGradient></defs><ellipse cx="7.5" cy="6.8" rx="6.3" ry="5.6" transform="rotate(40 7.5 6.8)" fill="url(#spk)" stroke="#555" stroke-width="0.8"/><circle cx="5.3" cy="4.6" r="1.8" fill="#fff" opacity="0.8"/><path d="M9.5 14Q13.5 12.5 14.5 8.5M8.5 15.5Q14.5 14 16 9" fill="none" stroke="#8a8cf0" stroke-width="0.9"/></svg>
<div class="a" style="left:1854px;top:993px;">发送</div>
<svg class="a" style="left:1892px;top:999px" width="6" height="3"><path d="M0 0H6L3 3Z" fill="#222"/></svg>
<div class="a" style="left:0;top:1021px;width:1920px;height:1px;background:#d5d5d5"></div>
</body></html>
